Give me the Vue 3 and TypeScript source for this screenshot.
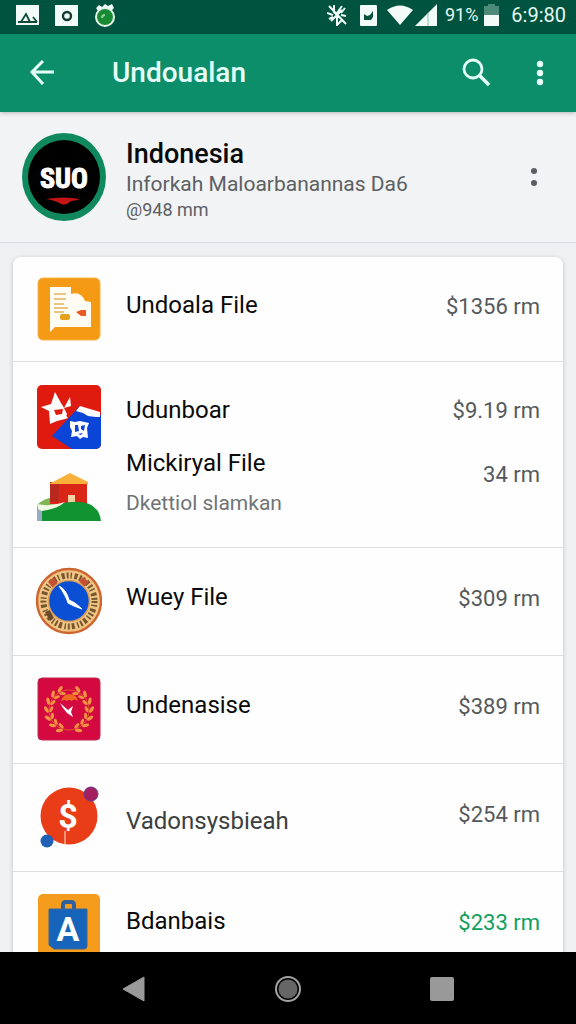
<script setup lang="ts">
type IconName = 'document' | 'flag' | 'house' | 'clock' | 'wreath' | 'coin' | 'bag'

interface Entry {
  icon: IconName
  title: string
  amount: string
  note?: string
  tone?: 'light' | 'green'
}

const groups: Entry[][] = [
  [{ icon: 'document', title: 'Undoala File', amount: '$1356 rm' }],
  [
    { icon: 'flag', title: 'Udunboar', amount: '$9.19 rm' },
    { icon: 'house', title: 'Mickiryal File', amount: '34 rm', note: 'Dkettiol slamkan' },
  ],
  [{ icon: 'clock', title: 'Wuey File', amount: '$309 rm' }],
  [{ icon: 'wreath', title: 'Undenasise', amount: '$389 rm' }],
  [{ icon: 'coin', title: 'Vadonsysbieah', amount: '$254 rm', tone: 'light' }],
  [{ icon: 'bag', title: 'Bdanbais', amount: '$233 rm', tone: 'green' }],
]

const leafAngles: number[] = [28, 50, 72, 94, 116, 138, 160]
</script>

<template>
  <div class="screen">
    <div class="status">
      <div class="status-side">
        <svg width="23" height="20" viewBox="0 0 23 20">
          <rect width="23" height="20" fill="#f2fbf8" />
          <path d="M5 17l5-8 4 8M17 12l4 5M2 17h19" fill="none" stroke="#0b4a3a" stroke-width="1.8" />
        </svg>
        <svg width="23" height="21" viewBox="0 0 23 21">
          <rect width="23" height="21" fill="#f2fbf8" />
          <circle cx="12" cy="11" r="4" fill="none" stroke="#123c32" stroke-width="2.4" />
        </svg>
        <svg width="22" height="24" viewBox="0 0 22 24">
          <path d="M2 5 5 2l3 2 3-3 3 2 4-2 2 4-3 3H4z" fill="#f2fbf8" />
          <circle cx="11" cy="14" r="9" fill="#188a34" stroke="#e8f7ee" stroke-width="2" />
          <path d="M8 15q0-3 3-3" fill="none" stroke="#8fd6a0" stroke-width="2" />
        </svg>
      </div>
      <div class="status-side status-right">
        <svg class="mute" width="21" height="22" viewBox="0 0 21 22">
          <path d="M2 2l17 18M7 1v7l3 3M10 11v10l5-5M4 17 15 6M15 2l-5 7M0 9l6 2M14 11l5 1M18 4l-4 5M2 15l4-2" fill="none" stroke="#f2fbf8" stroke-width="2" />
        </svg>
        <svg width="17" height="21" viewBox="0 0 17 21">
          <rect width="17" height="21" rx="1" fill="#f2fbf8" />
          <path d="M4 9v6h7l2-3V6l-3 4-3 1z" fill="#07513e" />
        </svg>
        <svg class="wifi" width="26" height="20" viewBox="0 0 26 20">
          <path d="M0 5Q13-4 26 5L13 20z" fill="#f2fbf8" />
        </svg>
        <svg width="22" height="22" viewBox="0 0 22 22">
          <path d="M22 0v22H0z" fill="#f2fbf8" />
          <path d="M13 9v13" stroke="#8abbac" stroke-width="1" />
        </svg>
        <span class="percent">91%</span>
        <svg class="battery" width="15" height="22" viewBox="0 0 15 22">
          <path d="M4 0h7v2h4v9H0V2h4z" fill="#4b8a79" />
          <path d="M0 11h15v11H0z" fill="#f2fbf8" />
        </svg>
        <span class="time">6:9:80</span>
      </div>
    </div>

    <header class="appbar">
      <button class="icon-button" type="button" aria-label="Back">
        <svg width="26" height="26" viewBox="0 0 26 26">
          <path d="M25 12H3M14 1 3 12l11 12" fill="none" stroke="#e6fff7" stroke-width="3" />
        </svg>
      </button>
      <h1>Undoualan</h1>
      <button class="icon-button search" type="button" aria-label="Search">
        <svg width="30" height="30" viewBox="0 0 30 30">
          <circle cx="12" cy="11" r="9" fill="none" stroke="#e6fff7" stroke-width="2.8" />
          <path d="M18 17l10 10" stroke="#e6fff7" stroke-width="3.6" />
        </svg>
      </button>
      <button class="icon-button" type="button" aria-label="More options">
        <svg width="8" height="26" viewBox="0 0 8 26" fill="#e6fff7">
          <circle cx="4" cy="4" r="3.2" />
          <circle cx="4" cy="13" r="3.2" />
          <circle cx="4" cy="22" r="3.2" />
        </svg>
      </button>
    </header>

    <section class="account">
      <svg class="avatar" width="84" height="88" viewBox="0 0 84 88">
        <ellipse cx="42" cy="44" rx="42" ry="44" fill="#11895f" />
        <ellipse cx="42" cy="44" rx="36" ry="37" fill="#000" />
        <text class="logo-text" x="42" y="55" text-anchor="middle">SUO</text>
        <path d="M24 66q17-3 34 0-5 2-9 2-5 5-10 3-4-3-15-5z" fill="#c41414" />
      </svg>
      <div class="account-text">
        <h2>Indonesia</h2>
        <p>Inforkah Maloarbanannas Da6</p>
        <p class="detail">@948 mm</p>
      </div>
      <button class="icon-button" type="button" aria-label="Account options">
        <svg width="8" height="18" viewBox="0 0 8 18" fill="#5b5e60">
          <circle cx="4" cy="3" r="3" />
          <circle cx="4" cy="15" r="3" />
        </svg>
      </button>
    </section>

    <main class="content">
      <ul class="card">
        <li v-for="(group, g) in groups" :key="g" class="group">
          <div v-for="entry in group" :key="entry.title" class="entry" :class="[entry.icon, entry.tone]">
            <svg v-if="entry.icon === 'document'" class="icon" width="64" height="64" viewBox="0 0 64 64">
              <rect x="1" y="1" width="62" height="62" rx="5" fill="#f59a15" stroke="#f7b04a" />
              <path d="M13 10h21v7q10-3 14 7l6 1v25H18l-5 5z" fill="#fffdf3" />
              <path d="M17 17h12M17 22h12M17 27h10M17 31h14M17 35h10" stroke="#e2b35c" stroke-width="1.6" />
              <rect x="23" y="37" width="10" height="6" rx="2" fill="#e3a41c" />
              <path d="M39 35l5-2h5v6h-5z" fill="#ec5a24" />
            </svg>
            <svg v-else-if="entry.icon === 'flag'" class="icon" width="64" height="64" viewBox="0 0 64 64">
              <rect width="64" height="64" rx="5" fill="#df1b10" />
              <path d="M15 51 42 22l22 8v29a5 5 0 0 1-5 5H35z" fill="#0b45d8" />
              <path d="M39 26l4-5 20 6v5h-4l-8-1-5-3z" fill="#fff" />
              <path d="M18 7l6 11 2 3 4 8-2 5-8 2-7 3-1-13-8-4 10-3zM17 25l2 5 6-1 1-5z" fill="#fff" fill-rule="evenodd" />
              <path d="M33 12l1 9-7 2zM27 28l4 5-3 1-3-3z" fill="#fff" />
              <path d="M33 36l5 1 5-1 9 2-2 5 1 10-5-1-3 2-3-3-6 1 1-6-2-4z" fill="#fff" />
              <path d="M38 40h3l1 6-4 1zM44 41l4-1-1 6-3-2zM41 49l5-1-2 2z" fill="#0b45d8" />
            </svg>
            <svg v-else-if="entry.icon === 'house'" class="icon" width="64" height="48" viewBox="0 0 64 48">
              <path d="M0 32q12-12 28-5l8 21H0z" fill="#80b554" />
              <path d="M13 9h37v22H13z" fill="#da2616" />
              <path d="M13 9h9v20h-9z" fill="#b92920" />
              <path d="M12 11 33 0l18 9v2z" fill="#f8b13a" />
              <path d="M31 22h7v8h-7z" fill="#f8d0a2" />
              <path d="M0 31q13 3 28-2l-9 8-17 2z" fill="#f2f6e4" />
              <path d="M5 48V38q14-2 22-8 34-6 37 18z" fill="#109431" />
              <path d="M0 36l5 2v10H0z" fill="#94adc0" />
            </svg>
            <svg v-else-if="entry.icon === 'clock'" class="icon" width="66" height="68" viewBox="0 0 66 68">
              <circle cx="33" cy="34" r="32" fill="#f0c583" stroke="#ce6531" stroke-width="2.4" />
              <circle cx="33" cy="34" r="25.5" fill="none" stroke="#75562f" stroke-width="6" stroke-dasharray="2 2 1.4 2.6 3 2" />
              <path d="M12 15l6-5 4 7-5 4zM47 10l6 5-5 5-5-6z" fill="#c65034" />
              <path d="M9 45l5-2 4 8-4 3z" fill="#6b4a2c" />
              <circle cx="33" cy="34" r="20.5" fill="#0b50d4" stroke="#dca157" stroke-width="1.6" />
              <path d="M23 19q7 3 10 14 6 2 13 9-9-3-14-6-2-7-9-17z" fill="#fff" stroke="#fff" stroke-width="1" />
            </svg>
            <svg v-else-if="entry.icon === 'wreath'" class="icon" width="64" height="64" viewBox="0 0 64 64">
              <rect x="1" y="1" width="62" height="62" rx="4" fill="#d4093f" stroke="#bf2854" />
              <circle cx="32" cy="33" r="20" fill="none" stroke="#df572d" stroke-width="1" />
              <g fill="#f39343">
                <g v-for="angle in leafAngles" :key="angle">
                  <g :transform="`rotate(${angle} 32 33)`">
                    <ellipse cx="30" cy="10.5" rx="3.6" ry="1.7" transform="rotate(28 30 10.5)" />
                    <ellipse cx="30" cy="15.5" rx="3.2" ry="1.5" transform="rotate(-28 30 15.5)" />
                  </g>
                  <g :transform="`rotate(${-angle} 32 33)`">
                    <ellipse cx="34" cy="10.5" rx="3.6" ry="1.7" transform="rotate(-28 34 10.5)" />
                    <ellipse cx="34" cy="15.5" rx="3.2" ry="1.5" transform="rotate(28 34 15.5)" />
                  </g>
                </g>
              </g>
              <path d="M24 24q2-7 9-7 7 1 8 7-4-3-6 0-3-2-5 0-2-2-6 0z" fill="#ee6a24" />
              <path d="M23 26l8 7 5-4-2 6 2 5-6-4-4-5z" fill="#fff" />
            </svg>
            <svg v-else-if="entry.icon === 'coin'" class="icon" width="64" height="64" viewBox="0 0 64 64">
              <circle cx="32" cy="31" r="28.5" fill="#e83d16" />
              <circle cx="54" cy="9" r="7" fill="#a41f5f" stroke="#633a93" stroke-width="1" />
              <circle cx="10" cy="56" r="6.5" fill="#2060b5" />
              <path d="M28 46v13" stroke="#f6ae93" stroke-width="1.5" />
              <text class="glyph" x="31" y="43" text-anchor="middle">$</text>
            </svg>
            <svg v-else class="icon" width="64" height="64" viewBox="0 0 64 64">
              <rect x="1" y="1" width="62" height="62" rx="5" fill="#f59c1d" />
              <path d="M26 17v-5q0-3 3-3h5q3 0 3 3v5" fill="none" stroke="#315f9e" stroke-width="4" />
              <path d="M12 16h38v37q0 3-3 3H17l-5-4z" fill="#1765ba" stroke="#3e6798" stroke-width="1" />
              <text class="glyph" x="31" y="48" text-anchor="middle">A</text>
            </svg>
            <div class="label">
              <h3>{{ entry.title }}</h3>
              <p v-if="entry.note">{{ entry.note }}</p>
            </div>
            <span class="amount">{{ entry.amount }}</span>
          </div>
        </li>
      </ul>
    </main>

    <nav class="navbar">
      <button type="button" aria-label="Back">
        <svg width="28" height="28" viewBox="0 0 28 28"><path d="M3 15 24 3v24z" fill="#999" stroke="#999" stroke-linejoin="round" /></svg>
      </button>
      <button type="button" aria-label="Home">
        <svg width="28" height="28" viewBox="0 0 28 28">
          <circle cx="14" cy="15" r="12" fill="none" stroke="#a3a3a3" stroke-width="2" />
          <circle cx="14" cy="15" r="9.5" fill="#666" />
        </svg>
      </button>
      <button type="button" aria-label="Recent apps">
        <svg width="24" height="26" viewBox="0 0 24 26"><rect y="2" width="24" height="24" rx="2" fill="#999" /></svg>
      </button>
    </nav>
  </div>
</template>

<style>
body {
  background: #eef0f2;
}
</style>

<style scoped>
.screen {
  display: flex;
  flex-direction: column;
  height: 100vh;
  overflow: hidden;
  background: #eef0f2;
  color: #0a0a0a;
  font-family: Roboto, "Liberation Sans", sans-serif;
}

h1,
h2,
h3,
p {
  margin: 0;
}

svg {
  display: block;
  flex: none;
}

button {
  display: flex;
  align-items: center;
  justify-content: center;
  padding: 0;
  border: 0;
  background: none;
}

.status {
  display: flex;
  flex: none;
  align-items: center;
  justify-content: space-between;
  height: 34px;
  padding: 0 10px 4px 16px;
  box-sizing: border-box;
  background: #00543f;
  color: #e6f8f2;
}

.status-side {
  display: flex;
  align-items: center;
  gap: 16px;
}

.status-right {
  gap: 2px;
}

.mute {
  margin-right: 10px;
}

.wifi {
  margin-left: 8px;
}

.percent {
  margin-left: 6px;
  font-size: 18px;
  line-height: 24px;
}

.battery {
  margin: 0 10px 0 4px;
}

.time {
  font-size: 20px;
  line-height: 24px;
}

.appbar {
  display: flex;
  flex: none;
  align-items: center;
  height: 78px;
  padding: 0 16px 0 22px;
  box-sizing: border-box;
  background: #0b8e69;
  color: #e6fff7;
  box-shadow: 0 1px 4px rgba(0, 0, 0, 0.25);
  z-index: 1;
}

.icon-button {
  flex: none;
  width: 40px;
  height: 40px;
}

.appbar h1 {
  flex: 1;
  margin-left: 50px;
  font-size: 28px;
  font-weight: 500;
  line-height: 32px;
}

.search {
  margin-right: 24px;
}

.account {
  display: flex;
  flex: none;
  align-items: center;
  height: 131px;
  padding: 0 22px;
  box-sizing: border-box;
  border-bottom: 1px solid #d9dcde;
  background: #f1f3f4;
}

.logo-text {
  fill: #fff;
  stroke: #fff;
  stroke-width: 1px;
  font-family: "Roboto Condensed", "Liberation Sans Narrow", Roboto, sans-serif;
  font-size: 28px;
  font-weight: 700;
}

.account-text {
  flex: 1;
  min-width: 0;
  margin-left: 20px;
  padding-top: 6px;
}

.account-text h2 {
  font-size: 27px;
  font-weight: 500;
  line-height: 32px;
}

.account-text p {
  color: #5c6063;
  font-size: 21px;
  line-height: 28px;
  white-space: nowrap;
}

.account-text .detail {
  font-size: 18px;
  line-height: 24px;
}

.content {
  flex: 1;
  min-height: 0;
  padding: 14px 13px;
  overflow-y: auto;
  scrollbar-width: none;
}

.card {
  margin: 0;
  padding: 0;
  border-radius: 8px;
  background: #fefefe;
  box-shadow: 0 1px 4px rgba(0, 0, 0, 0.2);
  list-style: none;
}

.group {
  padding: 20px 23px 20px 24px;
}

.group + .group {
  padding: 21px 23px 22px 24px;
  border-top: 1px solid #dcdfe0;
}

.group:nth-child(2) {
  padding: 23px 23px 26px 24px;
}

.entry {
  display: flex;
  align-items: center;
}

.label {
  flex: 1;
  min-width: 0;
  margin-left: 25px;
  padding-bottom: 8px;
}

.label h3 {
  font-size: 24px;
  font-weight: 400;
  line-height: 32px;
}

.label p {
  margin-top: 10px;
  color: #707476;
  font-size: 21px;
  line-height: 32px;
}

.amount {
  padding-bottom: 4px;
  color: #56595b;
  font-size: 22px;
  line-height: 28px;
}

.flag .label {
  padding-bottom: 14px;
}

.flag .amount {
  padding-bottom: 12px;
}

.house .icon {
  margin-top: 24px;
}

.house .label {
  align-self: flex-start;
  padding-bottom: 0;
}

.house h3 {
  line-height: 28px;
}

.house .amount {
  padding-bottom: 20px;
}

.clock .icon {
  margin: -2px -1px;
}

.light .label {
  padding: 8px 0 0;
}

.light h3 {
  color: #3c3f40;
}

.green .amount {
  color: #12a05f;
}

.glyph {
  fill: #fff;
  font-size: 34px;
  font-weight: 700;
}

.navbar {
  display: grid;
  flex: none;
  grid-template-columns: repeat(3, 1fr);
  height: 72px;
  padding: 0 10%;
  box-sizing: border-box;
  background: #000;
  z-index: 1;
}
</style>
